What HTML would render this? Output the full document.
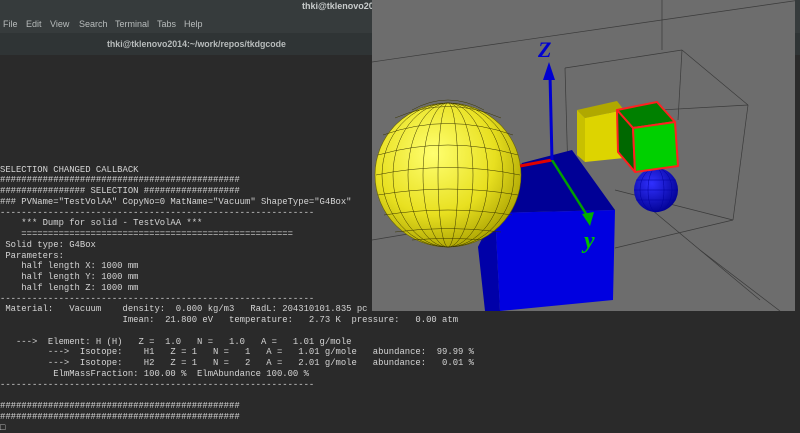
<!DOCTYPE html>
<html><head><meta charset="utf-8"><style>
html,body{margin:0;padding:0;width:800px;height:426px;overflow:hidden;background:#2a2a2a;}
.top{position:absolute;left:0;top:0;width:800px;height:33px;background:#363b3c;}
.title{position:absolute;left:0;top:33px;width:800px;height:22px;background:#2f3435;}
.ui{font-family:"Liberation Sans",sans-serif;font-size:9px;color:#b8bcbc;position:absolute;white-space:pre;}
pre{position:absolute;left:0;top:164.5px;margin:0;font-family:"Liberation Mono",monospace;font-size:8.9px;line-height:10.75px;color:#d4d4d4;}
svg{position:absolute;left:0;top:0;}
</style></head><body>
<div class="top"></div>
<div class="title"></div>
<div class="ui" style="left:302px;top:1px;font-weight:bold;color:#c8cccc">thki@tklenovo2014:~/work/repos/tkdgcode</div>
<div class="ui" style="left:3px;top:19px">File</div>
<div class="ui" style="left:26px;top:19px">Edit</div>
<div class="ui" style="left:50px;top:19px">View</div>
<div class="ui" style="left:79px;top:19px">Search</div>
<div class="ui" style="left:115px;top:19px">Terminal</div>
<div class="ui" style="left:157px;top:19px">Tabs</div>
<div class="ui" style="left:184px;top:19px">Help</div>
<div class="ui" style="left:107px;top:39px;font-weight:bold;font-size:8.8px">thki@tklenovo2014:~/work/repos/tkdgcode</div>
<pre>SELECTION CHANGED CALLBACK
#############################################
################ SELECTION ##################
### PVName="TestVolAA" CopyNo=0 MatName="Vacuum" ShapeType="G4Box"
-----------------------------------------------------------
    *** Dump for solid - TestVolAA ***
    ===================================================
 Solid type: G4Box
 Parameters:
    half length X: 1000 mm
    half length Y: 1000 mm
    half length Z: 1000 mm
-----------------------------------------------------------
 Material:   Vacuum    density:  0.000 kg/m3   RadL: 204310101.835 pc
                       Imean:  21.800 eV   temperature:   2.73 K  pressure:   0.00 atm

   --->  Element: H (H)   Z =  1.0   N =   1.0   A =   1.01 g/mole
         --->  Isotope:    H1   Z = 1   N =   1   A =   1.01 g/mole   abundance:  99.99 %
         --->  Isotope:    H2   Z = 1   N =   2   A =   2.01 g/mole   abundance:   0.01 %
          ElmMassFraction: 100.00 %  ElmAbundance 100.00 %
-----------------------------------------------------------

#############################################
#############################################
&#9633;</pre>
<svg width="800" height="426" viewBox="0 0 800 426">
<defs>
<radialGradient id="ys" cx="0.4" cy="0.35" r="0.7"><stop offset="0" stop-color="#ffff70"/><stop offset="0.6" stop-color="#e8e020"/><stop offset="1" stop-color="#a8a000"/></radialGradient>
<radialGradient id="bs" cx="0.4" cy="0.35" r="0.7"><stop offset="0" stop-color="#3030ff"/><stop offset="1" stop-color="#000090"/></radialGradient>
<clipPath id="v"><rect x="372" y="0" width="423" height="311"/></clipPath>
</defs>
<rect x="372" y="0" width="423" height="311" fill="#6d6d6d"/>
<g clip-path="url(#v)" stroke="#3a3a3a" stroke-width="0.7" fill="none">
<line x1="372" y1="62" x2="800" y2="0"/>
<line x1="662" y1="0" x2="662" y2="50"/>
<line x1="372" y1="240" x2="480" y2="222"/>
<line x1="565" y1="68" x2="682" y2="50"/>
<line x1="682" y1="50" x2="748" y2="105"/>
<line x1="748" y1="105" x2="733" y2="220"/>
<line x1="733" y1="220" x2="615" y2="248"/>
<line x1="565" y1="68" x2="568" y2="175"/>
<line x1="682" y1="50" x2="678" y2="120"/>
<line x1="608" y1="113" x2="748" y2="105"/>
<line x1="615" y1="190" x2="733" y2="220"/>
<line x1="640" y1="200" x2="760" y2="300"/>
<line x1="700" y1="250" x2="780" y2="311"/>
</g>
<g clip-path="url(#v)">
<polygon points="577,110 617,101 624,110 585,118" fill="#b0a800"/>
<polygon points="577,110 585,118 585,162 577,155" fill="#c8c000"/>
<polygon points="585,118 624,110 624,158 585,162" fill="#ddd400"/>
<polygon points="495,213 478,247 500,311 490,311" fill="#000090"/>
<polygon points="478,247 495,213 500,311 485,311" fill="#0000a8"/>
<polygon points="495,213 522,163 572,150 615,210" fill="#000096"/>
<polygon points="495,213 615,210 613,300 500,311" fill="#0000e0"/>
<ellipse cx="448" cy="175" rx="73" ry="72" fill="url(#ys)" stroke="#6a6400" stroke-width="0.6"/>
<g stroke="#3a3600" stroke-width="0.5" fill="none">
<ellipse cx="448" cy="175" rx="10" ry="72"/><ellipse cx="448" cy="175" rx="25" ry="72"/><ellipse cx="448" cy="175" rx="40" ry="72"/><ellipse cx="448" cy="175" rx="55" ry="72"/><ellipse cx="448" cy="175" rx="66" ry="72"/>
<path d="M378,155 Q448,135 518,155 M376,175 Q448,160 520,175 M378,195 Q448,183 518,195 M384,215 Q448,205 512,215 M395,232 Q448,225 501,232 M412,240 Q448,237 484,240 M383,135 Q448,112 513,135 M395,118 Q448,95 501,118 M412,110 Q448,90 484,110"/>
</g>
<circle cx="656" cy="190" r="22" fill="url(#bs)"/>
<g stroke="#0000a0" stroke-width="0.5" fill="none"><ellipse cx="656" cy="190" rx="8" ry="22"/><ellipse cx="656" cy="190" rx="16" ry="22"/><line x1="634" y1="190" x2="678" y2="190"/><line x1="636" y1="180" x2="676" y2="180"/><line x1="636" y1="200" x2="676" y2="200"/></g>
<polygon points="617,110 657,102 675,122 633,128" fill="#008000" stroke="#ff2020" stroke-width="2" stroke-linejoin="round"/>
<polygon points="617,110 633,128 635,172 618,152" fill="#006800" stroke="#ff2020" stroke-width="2" stroke-linejoin="round"/>
<polygon points="633,128 675,122 678,166 635,172" fill="#00d000" stroke="#ff2020" stroke-width="2" stroke-linejoin="round"/>
<line x1="552" y1="160" x2="520" y2="166" stroke="#e00000" stroke-width="3"/>
<line x1="552" y1="160" x2="590" y2="220" stroke="#00a000" stroke-width="2.5"/>
<polygon points="590,226 582,214 594,212" fill="#00b000"/>
<line x1="552" y1="160" x2="550" y2="75" stroke="#0000d0" stroke-width="3"/>
<polygon points="549,62 543,80 555,80" fill="#0000d0"/>
<text x="538" y="57" font-family="Liberation Serif,serif" font-style="italic" font-weight="bold" font-size="22" fill="#0000d0">Z</text>
<text x="584" y="248" font-family="Liberation Serif,serif" font-style="italic" font-weight="bold" font-size="24" fill="#00c000">y</text>
</g>
</svg>
</body></html>
